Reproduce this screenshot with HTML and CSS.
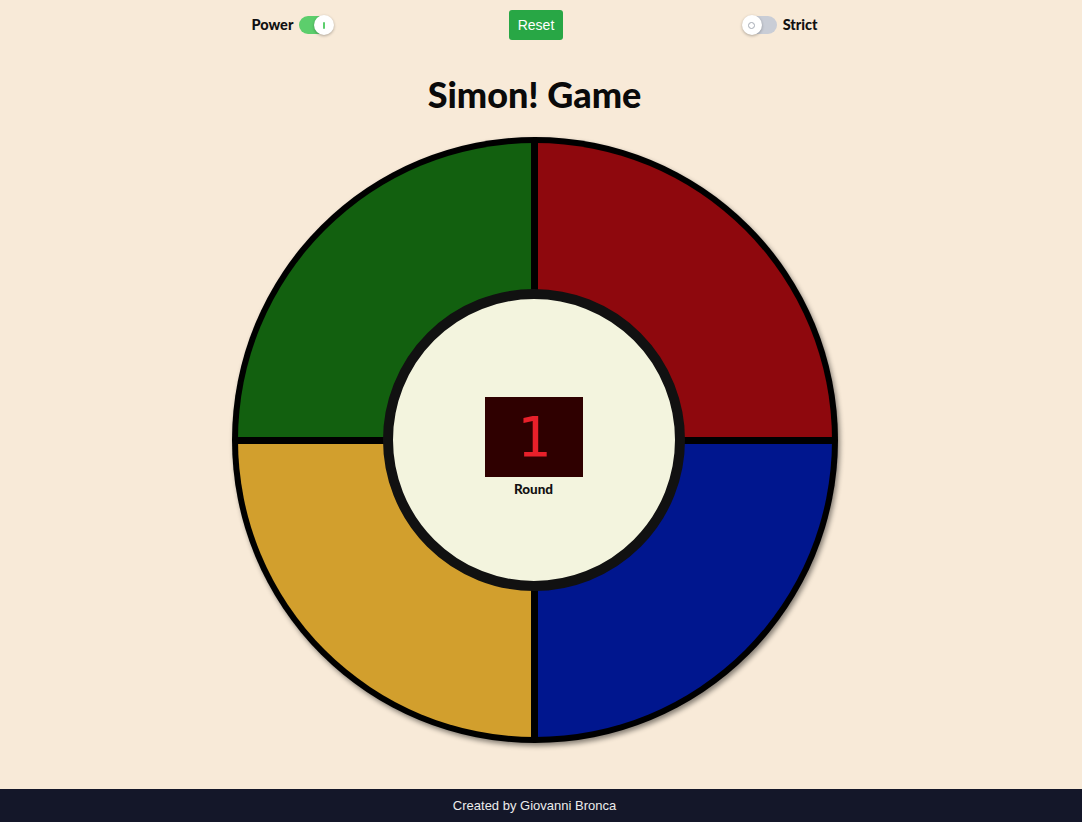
FILE: index.html
```html
<!DOCTYPE html>
<html>
<head>
<meta charset="utf-8">
<link rel="stylesheet" href="styles.css">
</head>
<body>
<div class="page">
  <header class="controls">
    <div class="switch-group">
      <span class="label">Power</span>
      <span class="toggle on"><span class="knob"><span class="mark-i"></span></span></span>
    </div>
    <button class="reset">Reset</button>
    <div class="switch-group">
      <span class="toggle off"><span class="knob"><span class="mark-o"></span></span></span>
      <span class="label">Strict</span>
    </div>
  </header>
  <h1 class="title">Simon! Game</h1>
  <div class="board">
    <div class="quads">
      <div class="quad green"></div>
      <div class="quad red"></div>
      <div class="quad yellow"></div>
      <div class="quad blue"></div>
    </div>
    <div class="center">
      <div class="display">1</div>
      <div class="round">Round</div>
    </div>
  </div>
</div>
<footer class="footer">Created by Giovanni Bronca</footer>
</body>
</html>
```
FILE: styles.css
```css
html, body { margin: 0; padding: 0; }
body {
  background: #f8ead8;
  min-height: 100vh;
  display: flex;
  flex-direction: column;
  font-family: "Lato", "Noto Sans", sans-serif;
}
.page {
  flex: 1;
  display: flex;
  flex-direction: column;
  align-items: center;
  padding-right: 13px;
}
.controls {
  width: 566px;
  padding-top: 10px;
  display: flex;
  justify-content: space-between;
  align-items: center;
}
.switch-group {
  display: flex;
  align-items: center;
  gap: 6px;
  height: 30px;
}
.label {
  font-weight: 900;
  font-size: 14.5px;
  color: #111;
  margin-top: -2px;
}
.toggle {
  position: relative;
  display: block;
  width: 34px;
  height: 18px;
  border-radius: 9px;
}
.toggle.on { background: #5cce6c; }
.toggle.off { background: #c9cdd6; }
.knob {
  position: absolute;
  top: -1px;
  width: 20px;
  height: 20px;
  border-radius: 50%;
  background: #fff;
  box-shadow: 0 1px 3px rgba(0,0,0,0.3);
  display: flex;
  align-items: center;
  justify-content: center;
}
.toggle.on .knob { right: -1px; }
.toggle.off .knob { left: -1px; }
.mark-i {
  width: 2px;
  height: 7px;
  background: #5cce6c;
  border-radius: 1px;
}
.mark-o {
  width: 5px;
  height: 5px;
  border: 1.5px solid #a5aab4;
  border-radius: 50%;
}
.reset {
  background: #28a745;
  color: #fff;
  border: none;
  border-radius: 3px;
  width: 54px;
  height: 30px;
  font-family: "Liberation Sans", Arial, sans-serif;
  font-size: 14px;
  padding: 0;
  margin-right: 4px;
}
.title {
  margin: 30px 0 19px;
  font-size: 36px;
  line-height: 48px;
  font-weight: 900;
  color: #0a0a0a;
}
.board {
  position: relative;
  width: 606px;
  height: 606px;
  box-sizing: border-box;
  border-radius: 50%;
  background: #000;
  padding: 6px;
  box-shadow: 2px 3px 5px rgba(0,0,0,0.45);
}
.quads {
  width: 100%;
  height: 100%;
  border-radius: 50%;
  overflow: hidden;
  display: grid;
  grid-template-columns: 1fr 1fr;
  grid-template-rows: 1fr 1fr;
  gap: 7px;
}
.green { background: #12600f; }
.red { background: #8e080d; }
.yellow { background: #d29f2d; }
.blue { background: #00168e; }
.center {
  position: absolute;
  left: 50%;
  top: 50%;
  width: 302px;
  height: 302px;
  margin: -151px 0 0 -152px;
  box-sizing: border-box;
  border-radius: 50%;
  border: 10px solid #111;
  background: #f3f4de;
  display: flex;
  flex-direction: column;
  align-items: center;
  justify-content: center;
}
.display {
  width: 98px;
  height: 80px;
  background: #2f0000;
  color: #e8202a;
  font-family: "DejaVu Sans Mono", monospace;
  font-size: 56px;
  line-height: 80px;
  text-align: center;
  margin-top: 14px;
}
.round {
  margin-top: 4px;
  font-size: 13.5px;
  font-weight: 900;
  color: #111;
}
.footer {
  height: 33px;
  background: #141729;
  color: #ececec;
  font-family: "Liberation Sans", Arial, sans-serif;
  font-size: 13px;
  display: flex;
  align-items: center;
  justify-content: center;
  padding-right: 13px;
}
```
